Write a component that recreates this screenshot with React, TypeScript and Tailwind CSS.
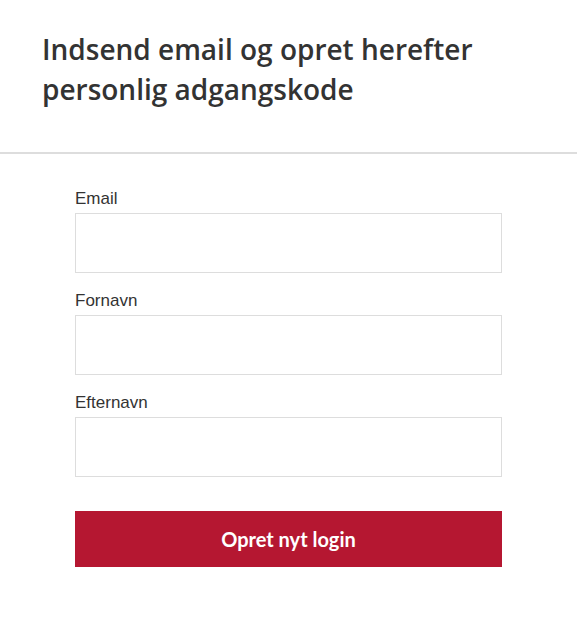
export default function App() {
  const fields = ["Email", "Fornavn", "Efternavn"];
  return (
    <div className="min-h-[625px] w-full bg-white">
      <div className="border-b-2 border-[#dddddd] px-[42px] pt-[29px] pb-[43px]">
        <h1
          className="text-[28px] leading-[40px] font-semibold text-[#333333]"
          style={{ fontFamily: '"Open Sans", sans-serif' }}
        >
          Indsend email og opret herefter
          <br />
          personlig adgangskode
        </h1>
      </div>
      <form
        className="flex flex-col px-[75px] pt-[35px]"
        style={{ fontFamily: '"Liberation Sans", Arial, sans-serif' }}
        onSubmit={(e) => e.preventDefault()}
      >
        {fields.map((f) => (
          <div key={f} className="mb-[18px] flex flex-col">
            <label className="mb-[5px] text-[17px] leading-[19px] text-[#333333]">{f}</label>
            <input
              type="text"
              className="h-[60px] w-full border border-[#dddddd] bg-white px-3 outline-none"
            />
          </div>
        ))}
        <button
          type="submit"
          className="mt-[16px] h-[56px] w-full bg-[#b51731] text-[20px] font-bold text-white"
          style={{ fontFamily: 'Lato, sans-serif' }}
        >
          Opret nyt login
        </button>
      </form>
    </div>
  );
}
